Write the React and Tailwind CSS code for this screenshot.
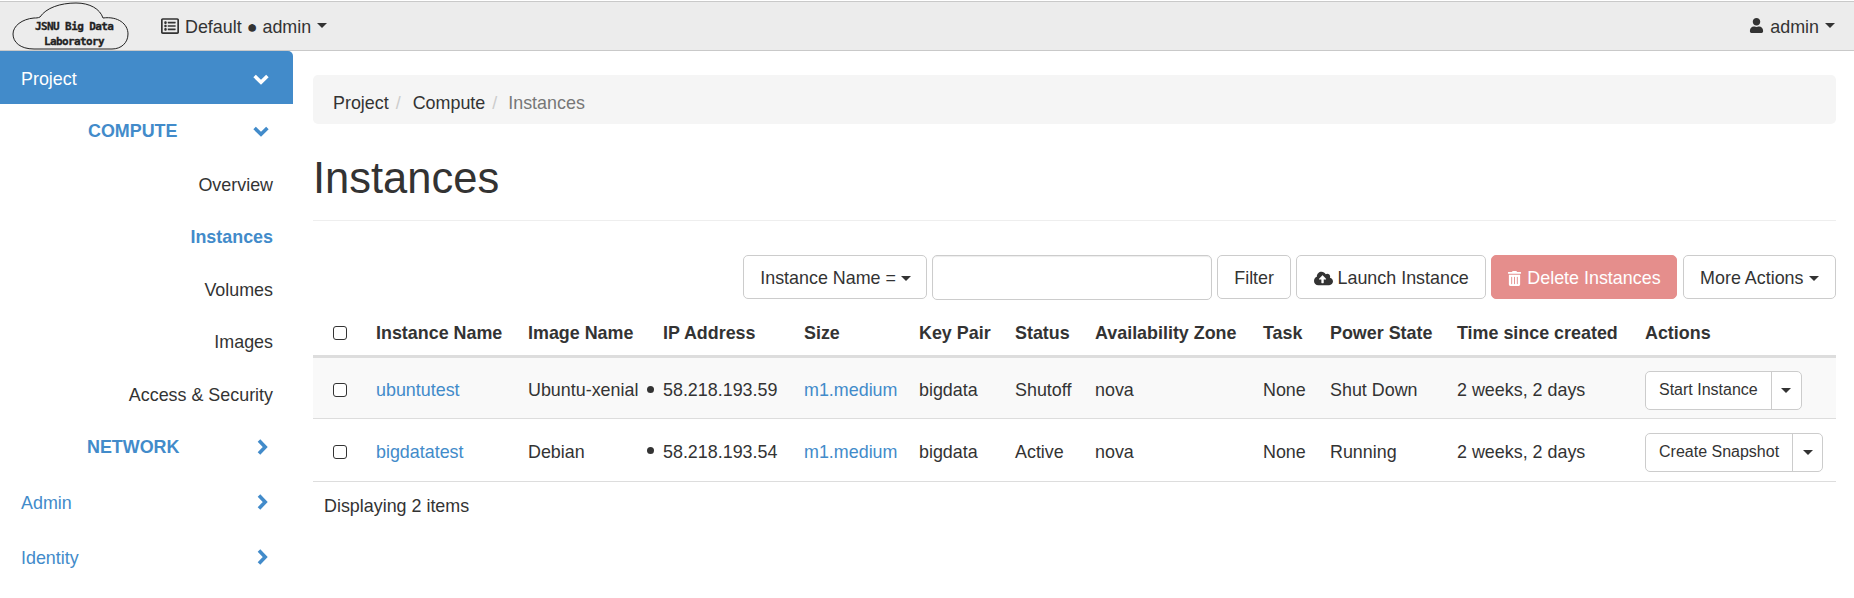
import { FaCloudUploadAlt, FaTrashAlt, FaUser, FaRegListAlt } from 'react-icons/fa';

const Caret = ({ className = '' }) => (
  <span className={`inline-block w-0 h-0 border-t-[5px] border-x-[5px] border-x-transparent border-t-[#333] ${className}`}></span>
);

const ChevronDown = ({ className = '' }) => (
  <svg width="16" height="11" viewBox="0 0 16 11" fill="none" stroke="currentColor" strokeWidth="3.6" className={className}>
    <path d="M1.6 2 L8 8.2 L14.4 2" />
  </svg>
);

const ChevronRight = ({ className = '' }) => (
  <svg width="11" height="16" viewBox="0 0 11 16" fill="none" stroke="currentColor" strokeWidth="3.6" className={className}>
    <path d="M2 1.6 L8.2 8 L2 14.4" />
  </svg>
);

const Logo = () => (
  <div className="relative w-[161px] h-[48px] shrink-0">
    <svg width="130" height="48" viewBox="0 2 130 48" fill="#ececec" stroke="#222" strokeWidth="1" className="absolute left-0 top-0">
      <path d="M34 49C20 49 13 42 13 34C13 26 22 19 34 18C36 18 38 18 40 17C46 8 60 3 76 3C90 3 100 9 103 18C118 16 128 24 128 34C128 43 121 49 112 49Z" />
    </svg>
    <div className="absolute left-[35px] top-[17px] w-[78px] text-center whitespace-nowrap font-['DejaVu_Sans_Mono',monospace] font-bold text-[11px] tracking-[-0.6px] leading-[15px] text-[#222] [-webkit-text-stroke:0.3px_#222]">
      <div>JSNU Big Data</div>
      <div>Laboratory</div>
    </div>
  </div>
);

const Navbar = () => (
  <div className="h-[50px] mt-px bg-[#ececec] border-y border-[#c9c9c9] flex items-center text-[#333]">
    <Logo />
    <div className="flex items-center gap-[6px]">
      <FaRegListAlt className="text-[18px]" />
      <span className="pt-[2px]">Default ● admin</span>
      <Caret />
    </div>
    <div className="ml-auto flex items-center pr-[19px] gap-[6px]">
      <FaUser className="text-[15px]" />
      <span className="pt-[2px]">admin</span>
      <Caret />
    </div>
  </div>
);

const SubItem = ({ label, active }) => (
  <div className={`h-[52.5px] flex items-center justify-end pr-[20px] pt-[2px] ${active ? 'text-[#428bca] font-bold' : 'text-[#333]'}`}>{label}</div>
);

const Sidebar = () => (
  <div className="w-[293px] shrink-0">
    <div className="h-[53px] bg-[#428bca] rounded-tr-[5px] text-white flex items-center justify-between pl-[21px] pr-[24px] pt-[3px]">
      <span>Project</span>
      <ChevronDown />
    </div>
    <div className="h-[54px] flex items-center text-[#428bca] font-bold">
      <span className="ml-[88px]">COMPUTE</span>
      <ChevronDown className="ml-auto mr-[24px]" />
    </div>
    <SubItem label="Overview" />
    <SubItem label="Instances" active />
    <SubItem label="Volumes" />
    <SubItem label="Images" />
    <SubItem label="Access &amp; Security" />
    <div className="h-[53px] flex items-center text-[#428bca] font-bold">
      <span className="ml-[87px]">NETWORK</span>
      <ChevronRight className="ml-auto mr-[25px] -mt-[1px]" />
    </div>
    <div className="h-[59px] flex items-center justify-between text-[#428bca] pl-[21px] pr-[25px]">
      <span>Admin</span>
      <ChevronRight className="-mt-[2px]" />
    </div>
    <div className="h-[52px] flex items-center justify-between text-[#428bca] pl-[21px] pr-[25px]">
      <span>Identity</span>
      <ChevronRight className="-mt-[3px]" />
    </div>
  </div>
);

const btn = 'h-[44px] pt-[2px] bg-white border border-[#ccc] rounded-[5px] flex items-center text-[#333] whitespace-nowrap';

const Toolbar = () => (
  <div className="flex justify-end gap-[5px] h-[44px] mt-[34px]">
    <button className={`${btn} px-[16px] gap-[5px] w-[184px]`}>Instance Name = <Caret /></button>
    <input className="w-[280px] h-[45px] border border-[#ccc] rounded-[5px] shadow-[inset_0_1px_1px_rgba(0,0,0,0.075)]" />
    <button className={`${btn} px-[16px]`}>Filter</button>
    <button className={`${btn} px-[16.5px] gap-[5px]`}><FaCloudUploadAlt className="text-[19px]" />Launch Instance</button>
    <button className="h-[44px] px-[15px] mr-[1px] pt-[2px] bg-[#e58e8c] border border-[#e58e8c] rounded-[5px] flex items-center gap-[5px] text-white whitespace-nowrap"><FaTrashAlt className="text-[15px]" />Delete Instances</button>
    <button className={`${btn} px-[16.5px] gap-[5px]`}>More Actions <Caret /></button>
  </div>
);

const Check = () => <span className="block w-[14px] h-[14px] border border-[#333] rounded-[3px] bg-white"></span>;

const SplitButton = ({ label }) => (
  <div className="inline-flex h-[39px] border border-[#ccc] rounded-[5px] bg-white text-[16px] align-middle">
    <span className="px-[13px] flex items-center border-r border-[#ccc] whitespace-nowrap">{label}</span>
    <span className="w-[29px] flex items-center justify-center"><Caret /></span>
  </div>
);

const th = 'text-left font-bold px-[10px] pt-[4px] h-[48px] whitespace-nowrap';
const td = 'px-[10px] pt-[5px] whitespace-nowrap';

const rows = [
  { name: 'ubuntutest', image: 'Ubuntu-xenial', ip: '58.218.193.59', status: 'Shutoff', power: 'Shut Down', action: 'Start Instance', bg: 'bg-[#f9f9f9] h-[62px]' },
  { name: 'bigdatatest', image: 'Debian', ip: '58.218.193.54', status: 'Active', power: 'Running', action: 'Create Snapshot', bg: 'bg-white h-[63px]' },
];

const Table = () => (
  <table className="w-full table-fixed border-collapse mt-[9px]">
    <colgroup>
      <col className="w-[53px]" />
      <col className="w-[152px]" />
      <col className="w-[135px]" />
      <col className="w-[141px]" />
      <col className="w-[115px]" />
      <col className="w-[96px]" />
      <col className="w-[80px]" />
      <col className="w-[168px]" />
      <col className="w-[67px]" />
      <col className="w-[127px]" />
      <col className="w-[188px]" />
      <col />
    </colgroup>
    <thead>
      <tr className="border-b-[3px] border-[#ddd]">
        <th className={`${th} pl-[20px]`}><Check /></th>
        <th className={th}>Instance Name</th>
        <th className={th}>Image Name</th>
        <th className={th}>IP Address</th>
        <th className={th}>Size</th>
        <th className={th}>Key Pair</th>
        <th className={th}>Status</th>
        <th className={th}>Availability Zone</th>
        <th className={th}>Task</th>
        <th className={th}>Power State</th>
        <th className={th}>Time since created</th>
        <th className={th}>Actions</th>
      </tr>
    </thead>
    <tbody>
      {rows.map((r) => (
        <tr key={r.name} className={`border-b border-[#ddd] ${r.bg}`}>
          <td className={`${td} pl-[20px]`}><Check /></td>
          <td className={`${td} text-[#428bca]`}>{r.name}</td>
          <td className={td}>{r.image}</td>
          <td className={`${td} relative`}>
            <span className="absolute left-[-6px] top-[28px] w-[7px] h-[7px] rounded-full bg-[#333]"></span>
            {r.ip}
          </td>
          <td className={`${td} text-[#428bca]`}>m1.medium</td>
          <td className={td}>bigdata</td>
          <td className={td}>{r.status}</td>
          <td className={td}>nova</td>
          <td className={td}>None</td>
          <td className={td}>{r.power}</td>
          <td className={td}>2 weeks, 2 days</td>
          <td className={td}><SplitButton label={r.action} /></td>
        </tr>
      ))}
    </tbody>
  </table>
);

export default function App() {
  return (
    <div className="h-[598px] bg-white text-[17.9px] text-[#333] font-['Liberation_Sans',Arial,sans-serif] overflow-hidden">
      <Navbar />
      <div className="flex">
        <Sidebar />
        <div className="flex-1 pl-[20px] pr-[18px] pt-[24px]">
          <div className="h-[49px] bg-[#f5f5f5] rounded-[5px] flex items-center pl-[20px] pt-[7px]">
            <span>Project</span><span className="text-[#ccc] ml-[7px] mr-[12px]">/</span>
            <span>Compute</span><span className="text-[#ccc] ml-[7px] mr-[11px]">/</span>
            <span className="text-[#777]">Instances</span>
          </div>
          <h1 className="text-[43.5px] leading-[47px] font-normal mt-[31px] pb-[18px] border-b border-[#eee]">Instances</h1>
          <Toolbar />
          <Table />
          <div className="px-[11px] pt-[11px]">Displaying 2 items</div>
        </div>
      </div>
    </div>
  );
}
